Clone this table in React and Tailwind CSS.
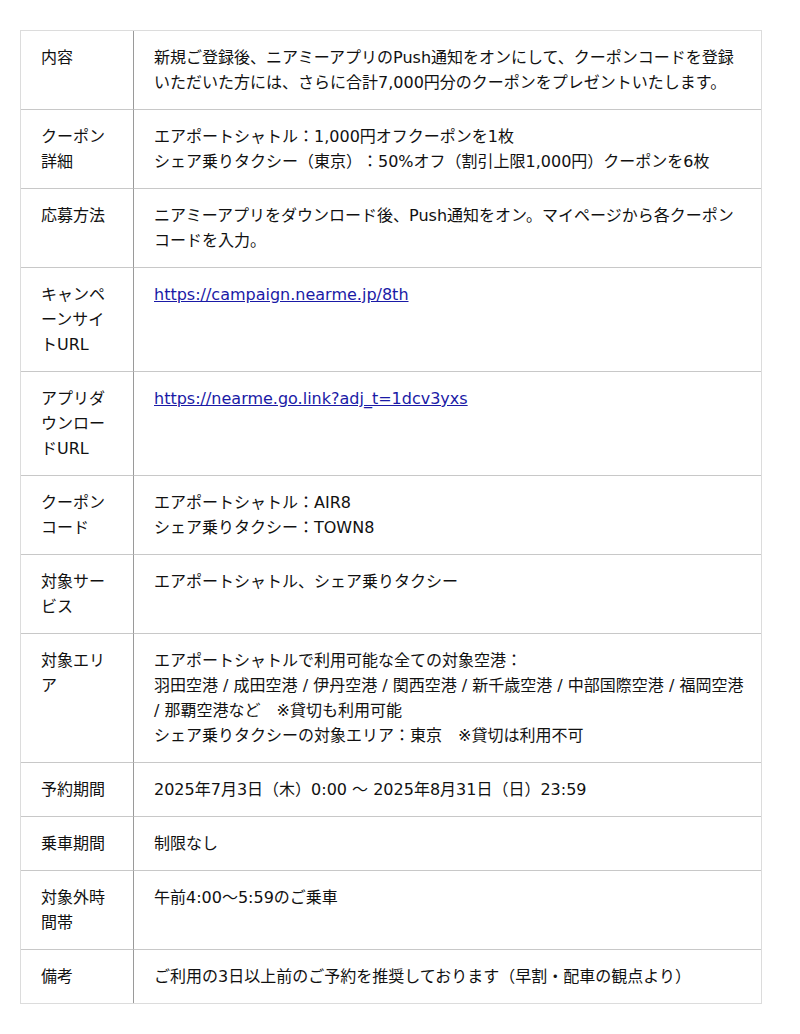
const rows = [
  {
    label: '内容',
    lines: [
      '新規ご登録後、ニアミーアプリのPush通知をオンにして、クーポンコードを登録いただいた方には、さらに合計7,000円分のクーポンをプレゼントいたします。',
    ],
  },
  {
    label: 'クーポン詳細',
    lines: [
      'エアポートシャトル：1,000円オフクーポンを1枚',
      'シェア乗りタクシー（東京）：50%オフ（割引上限1,000円）クーポンを6枚',
    ],
  },
  {
    label: '応募方法',
    lines: [
      'ニアミーアプリをダウンロード後、Push通知をオン。マイページから各クーポンコードを入力。',
    ],
  },
  {
    label: 'キャンペーンサイトURL',
    link: 'https://campaign.nearme.jp/8th',
  },
  {
    label: 'アプリダウンロードURL',
    link: 'https://nearme.go.link?adj_t=1dcv3yxs',
  },
  {
    label: 'クーポンコード',
    lines: ['エアポートシャトル：AIR8', 'シェア乗りタクシー：TOWN8'],
  },
  {
    label: '対象サービス',
    lines: ['エアポートシャトル、シェア乗りタクシー'],
  },
  {
    label: '対象エリア',
    lines: [
      'エアポートシャトルで利用可能な全ての対象空港：',
      '羽田空港 / 成田空港 / 伊丹空港 / 関西空港 / 新千歳空港 / 中部国際空港 / 福岡空港 / 那覇空港など　※貸切も利用可能',
      'シェア乗りタクシーの対象エリア：東京　※貸切は利用不可',
    ],
  },
  {
    label: '予約期間',
    lines: ['2025年7月3日（木）0:00 〜 2025年8月31日（日）23:59'],
  },
  {
    label: '乗車期間',
    lines: ['制限なし'],
  },
  {
    label: '対象外時間帯',
    lines: ['午前4:00〜5:59のご乗車'],
  },
  {
    label: '備考',
    lines: ['ご利用の3日以上前のご予約を推奨しております（早割・配車の観点より）'],
  },
]

const App = () => {
  return (
    <div
      className="min-h-screen bg-white pt-[30px] pl-[20px] text-[16px] leading-[25px] text-[#111] [text-spacing-trim:space-all]"
      style={{ fontFamily: '"DejaVu Sans", "Noto Sans CJK JP", sans-serif' }}
    >
      <table className="w-[742px] border-separate border-spacing-0 border border-[#dcdcdc]">
        <tbody>
          {rows.map((row, i) => {
            const last = i === rows.length - 1
            return (
              <tr key={row.label}>
                <td
                  className={`w-[113px] align-top px-5 py-[14px] border-r border-r-[#9a9a9a] break-all ${
                    last ? '' : 'border-b border-b-[#c8c8c8]'
                  }`}
                >
                  {row.label}
                </td>
                <td
                  className={`align-top pl-5 pr-4 py-[14px] ${
                    last ? '' : 'border-b border-b-[#c8c8c8]'
                  }`}
                >
                  {row.link ? (
                    <a href="#" className="text-[#1a1aa6] underline">
                      {row.link}
                    </a>
                  ) : (
                    row.lines.map((line) => <p key={line}>{line}</p>)
                  )}
                </td>
              </tr>
            )
          })}
        </tbody>
      </table>
    </div>
  )
}

export default App
